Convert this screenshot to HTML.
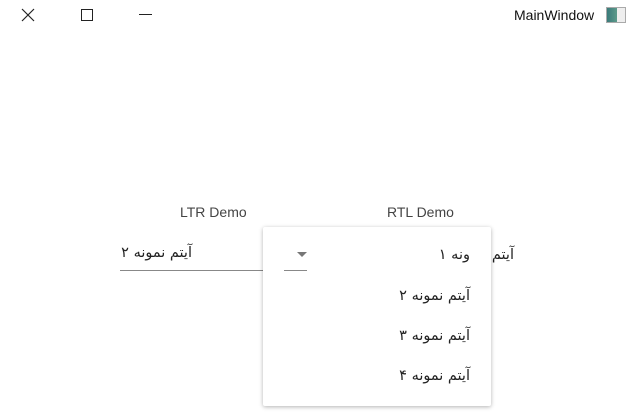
<!DOCTYPE html>
<html><head><meta charset="utf-8"><style>
html,body{margin:0;padding:0;width:628px;height:417px;background:#fff;overflow:hidden;position:relative;font-family:"Liberation Sans","DejaVu Sans",sans-serif;color:#222}
.a{position:absolute}
.ar{font-family:"DejaVu Sans",sans-serif;font-size:14.5px;direction:rtl;white-space:nowrap;color:#222}
</style></head><body>
<svg class="a" style="left:20px;top:7px" width="16" height="16"><path d="M2 2L14 14M14 2L2 14" stroke="#222" stroke-width="1.2"/></svg>
<div class="a" style="left:81px;top:9px;width:10px;height:10px;border:1px solid #222"></div>
<div class="a" style="left:139px;top:14px;width:13px;height:1px;background:#222"></div>
<div class="a" style="left:514px;top:7px;font-size:14px;color:#111">MainWindow</div>
<div class="a" style="left:606px;top:7px;width:18px;height:14px;border:1px solid #aaa;background:linear-gradient(90deg,#3a7a7a 0,#5c9a8a 55%,#eee 55%)"></div>

<div class="a" style="left:180px;top:204px;font-size:14px;color:#444">LTR Demo</div>
<div class="a" style="left:387px;top:204px;font-size:14px;color:#444">RTL Demo</div>

<div class="a ar" style="right:436px;top:245px">آیتم نمونه ۲</div>
<div class="a" style="left:120px;top:270px;width:143px;height:1px;background:#888"></div>

<div class="a ar" style="right:114px;top:247px">آیتم</div>

<div class="a" style="left:263px;top:227px;width:228px;height:179px;background:#fff;border-radius:2px;box-shadow:0 1px 4px rgba(0,0,0,.3)">
  <svg class="a" style="left:33px;top:24px" width="12" height="8"><path d="M1 1H11L6 6Z" fill="#777"/></svg>
  <div class="a" style="left:21px;top:43px;width:23px;height:1px;background:#888"></div>
  <div class="a ar" style="right:21px;top:20px">ونه ۱</div>
  <div class="a ar" style="right:21px;top:61px">آیتم نمونه ۲</div>
  <div class="a ar" style="right:21px;top:101px">آیتم نمونه ۳</div>
  <div class="a ar" style="right:21px;top:141px">آیتم نمونه ۴</div>
</div>
</body></html>
